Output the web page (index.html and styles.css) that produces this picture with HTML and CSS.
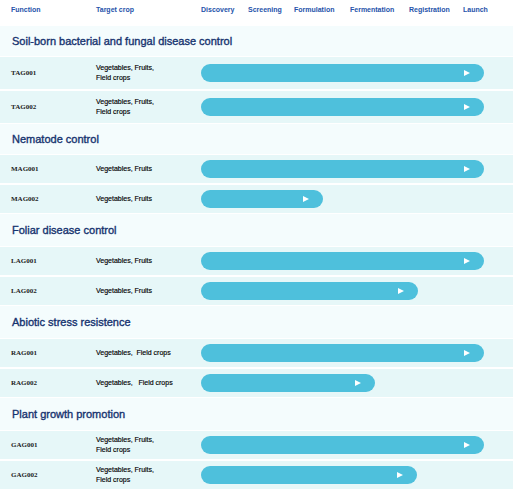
FILE: index.html
```html
<!DOCTYPE html>
<html lang="en">
<head>
<meta charset="utf-8">
<title>Pipeline</title>
<link rel="stylesheet" href="styles.css">
</head>
<body>
<div class="chart">
  <div class="head">
    <div class="h-func">Function</div>
    <div class="h-crop">Target crop</div>
    <div class="stages">
      <span>Discovery</span><span>Screening</span><span>Formulation</span><span>Fermentation</span><span>Registration</span><span>Launch</span>
    </div>
  </div>

  <section class="group">
    <h2 class="group-title group-title--short">Soil-born bacterial and fungal disease control</h2>
    <div class="row row--tall">
      <div class="code">TAG001</div>
      <div class="crop">Vegetables, Fruits,<br>Field crops</div>
      <div class="track"><div class="bar" style="width:283px"><span class="arrow"></span></div></div>
    </div>
    <div class="row row--tall">
      <div class="code">TAG002</div>
      <div class="crop">Vegetables, Fruits,<br>Field crops</div>
      <div class="track"><div class="bar" style="width:283px"><span class="arrow"></span></div></div>
    </div>
  </section>

  <section class="group">
    <h2 class="group-title group-title--short">Nematode control</h2>
    <div class="row">
      <div class="code">MAG001</div>
      <div class="crop">Vegetables, Fruits</div>
      <div class="track"><div class="bar" style="width:283px"><span class="arrow"></span></div></div>
    </div>
    <div class="row">
      <div class="code">MAG002</div>
      <div class="crop">Vegetables, Fruits</div>
      <div class="track"><div class="bar" style="width:122px"><span class="arrow"></span></div></div>
    </div>
  </section>

  <section class="group">
    <h2 class="group-title">Foliar disease control</h2>
    <div class="row">
      <div class="code">LAG001</div>
      <div class="crop">Vegetables, Fruits</div>
      <div class="track"><div class="bar" style="width:283px"><span class="arrow"></span></div></div>
    </div>
    <div class="row">
      <div class="code">LAG002</div>
      <div class="crop">Vegetables, Fruits</div>
      <div class="track"><div class="bar" style="width:217px"><span class="arrow"></span></div></div>
    </div>
  </section>

  <section class="group">
    <h2 class="group-title">Abiotic stress resistence</h2>
    <div class="row">
      <div class="code">RAG001</div>
      <div class="crop">Vegetables,&nbsp; Field crops</div>
      <div class="track"><div class="bar" style="width:283px"><span class="arrow"></span></div></div>
    </div>
    <div class="row">
      <div class="code">RAG002</div>
      <div class="crop">Vegetables,&nbsp;&nbsp; Field crops</div>
      <div class="track"><div class="bar" style="width:174px"><span class="arrow"></span></div></div>
    </div>
  </section>

  <section class="group">
    <h2 class="group-title">Plant growth promotion</h2>
    <div class="row">
      <div class="code">GAG001</div>
      <div class="crop">Vegetables, Fruits,<br>Field crops</div>
      <div class="track"><div class="bar" style="width:283px"><span class="arrow"></span></div></div>
    </div>
    <div class="row">
      <div class="code">GAG002</div>
      <div class="crop">Vegetables, Fruits,<br>Field crops</div>
      <div class="track"><div class="bar" style="width:216px"><span class="arrow"></span></div></div>
    </div>
  </section>
</div>
</body>
</html>
```

FILE: styles.css
```css
html, body {
  margin: 0;
  padding: 0;
  background: #ffffff;
}

body {
  font-family: "Liberation Sans", Arial, sans-serif;
}

.chart {
  display: flex;
  flex-direction: column;
}

.head {
  display: grid;
  grid-template-columns: 96px 105px 1fr;
  height: 26px;
  box-sizing: border-box;
  padding-top: 6px;
  font-size: 7px;
  line-height: 8px;
  font-weight: 700;
  color: #2552aa;
}

.h-func {
  padding-left: 11px;
}

.stages {
  display: grid;
  grid-template-columns: 47px 46px 56px 59px 54px auto;
}

.group {
  display: flex;
  flex-direction: column;
  gap: 2px;
  margin-bottom: 1px;
}

.group-title {
  margin: 0 0 -1px;
  height: 32px;
  box-sizing: border-box;
  display: flex;
  align-items: center;
  padding-left: 12px;
  background: #f4fcfd;
  font-size: 11px;
  font-weight: 400;
  color: #16336f;
  -webkit-text-stroke: 0.35px #16336f;
}

.group-title--short {
  height: 30px;
}

.row {
  display: grid;
  grid-template-columns: 96px 105px 1fr;
  align-items: center;
  height: 28px;
  background: #e6f7f8;
}

.row--tall {
  height: 32px;
}

.code {
  padding-left: 11px;
  font-family: "Liberation Serif", "Times New Roman", serif;
  font-weight: 700;
  font-size: 7px;
  color: #222222;
}

.crop {
  font-size: 7px;
  line-height: 10.5px;
  color: #000000;
  -webkit-text-stroke: 0.15px #000000;
}

.track {
  display: flex;
  align-items: center;
}

.bar {
  height: 18px;
  border-radius: 9px;
  background: #4ec0dc;
  display: flex;
  align-items: center;
  justify-content: flex-end;
  padding-right: 14px;
  box-sizing: border-box;
}

.arrow {
  width: 0;
  height: 0;
  border-left: 6px solid #ffffff;
  border-top: 3.5px solid transparent;
  border-bottom: 3.5px solid transparent;
}
```
